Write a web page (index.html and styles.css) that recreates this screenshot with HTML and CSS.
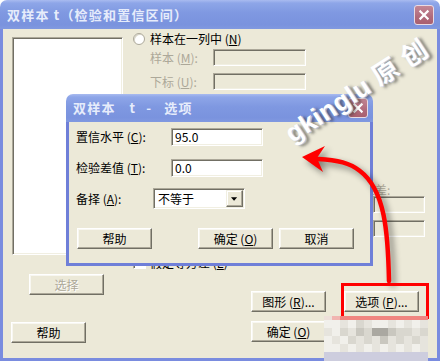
FILE: index.html
```html
<!DOCTYPE html>
<html><head><meta charset="utf-8"><link rel="stylesheet" href="styles.css"></head>
<body>
<div class="win">
  <div class="tbar">
    <span class="ttl">双样本&nbsp;t（检验和置信区间）</span>
    <span class="xbtn"><svg viewBox="0 0 20 20"><path d="M6 6 L14 14 M14 6 L6 14"/></svg></span>
  </div>
  <div class="wbody">
    <div class="lcol">
      <div class="listbox"></div>
      <div class="btn dis b-sel">选择</div>
      <div class="btn b-help">帮助</div>
    </div>
    <div class="rcol">
      <div class="opt"><span class="radio"></span><span>样本在一列中 (<u>N</u>)</span></div>
      <div class="fld"><span class="flab">样本 (<u>M</u>):</span><span class="edit dis"></span></div>
      <div class="fld f2"><span class="flab">下标 (<u>U</u>):</span><span class="edit dis"></span></div>
      <div class="summ">
        <span class="slab">标准差:</span>
        <span class="edit dis se"></span>
        <span class="edit dis se se2"></span>
      </div>
      <div class="opt chkrow"><span class="chk"></span><span>假定等方差 (<u>E</u>)</span></div>
      <div class="brow">
        <div class="btn">图形 (<u>R</u>)...</div>
        <div class="btn">选项 (<u>P</u>)...</div>
      </div>
      <div class="brow b2">
        <div class="btn">确定 (<u>O</u>)</div>
        <div class="btn">取消</div>
      </div>
    </div>
  </div>

  <div class="dlg">
    <div class="dtbar">
      <span class="dttl"><span class="dt1">双样本</span><span class="dt2">t</span><span class="dt3">-</span><span class="dt4">选项</span></span>
      <span class="xbtn"><svg viewBox="0 0 20 20"><path d="M6 6 L14 14 M14 6 L6 14"/></svg></span>
    </div>
    <div class="dbody">
      <div class="drow"><span class="dlab">置信水平 (<u>C</u>):</span><span class="edit val">95.0</span></div>
      <div class="drow r2"><span class="dlab">检验差值 (<u>T</u>):</span><span class="edit val">0.0</span></div>
      <div class="drow r3"><span class="dlab l3">备择 (<u>A</u>):</span>
        <span class="combo"><span class="ctext">不等于</span><span class="cbtn"><svg viewBox="0 0 8 4"><path d="M0 0 H7 L3.5 4 Z"/></svg></span></span>
      </div>
      <div class="dbtns">
        <div class="btn">帮助</div>
        <div class="btn ok">确定 (<u>O</u>)</div>
        <div class="btn cn">取消</div>
      </div>
    </div>
  </div>

  <div class="wmark">gkinglu 原 创</div>

  <svg class="arrow" viewBox="0 0 440 361" width="440" height="361">
    <path d="M389 281 C388 232 385 190 360 171 C350 163 338 160 318 159" stroke="#ff0000" stroke-width="4.5" fill="none" stroke-linecap="round"/>
    <path d="M302 157 L325 146 L317 158 L323 172 Z" fill="#ff0000"/>
  </svg>

  <div class="redbox"></div>

  <div class="mosaic">
    <i class="q"></i><i class="r"></i><i class="p"></i><i class="p"></i><i class="p"></i><i class="p"></i><i class="p"></i><i class="p"></i><i class="p"></i><i class="p"></i><i class="p"></i><i class="p"></i><i class="p"></i>
    <i class="a"></i><i class="a"></i><i class="b"></i><i class="a"></i><i class="c"></i><i class="b"></i><i class="a"></i><i class="a"></i><i class="b"></i><i class="a"></i><i class="b"></i><i class="a"></i><i class="b"></i>
    <i class="b"></i><i class="a"></i><i class="c"></i><i class="b"></i><i class="d"></i><i class="c"></i><i class="e"></i><i class="e"></i><i class="d"></i><i class="c"></i><i class="c"></i><i class="b"></i><i class="c"></i>
    <i class="a"></i><i class="b"></i><i class="a"></i><i class="c"></i><i class="b"></i><i class="c"></i><i class="b"></i><i class="d"></i><i class="b"></i><i class="c"></i><i class="b"></i><i class="c"></i><i class="b"></i>
    <i class="a"></i><i class="a"></i><i class="b"></i><i class="a"></i><i class="b"></i><i class="a"></i><i class="b"></i><i class="a"></i><i class="b"></i><i class="a"></i><i class="b"></i><i class="a"></i><i class="b"></i>
  </div>
  <div class="lav"></div>
</div>
</body></html>
```

FILE: styles.css
```css
* { box-sizing: border-box; margin: 0; padding: 0; }
body {
  width: 440px; height: 361px; overflow: hidden; background: #ffffff;
  font-family: "Noto Sans CJK SC", "Noto Sans", sans-serif; font-size: 12px; color: #000;
}
u { text-decoration: underline; text-underline-offset: 1px; }

.win { position: relative; width: 440px; height: 361px; display: flex; flex-direction: column; }

.tbar {
  height: 29px; flex: none; display: flex; align-items: center; justify-content: space-between;
  padding: 0 6px 0 7px; border-radius: 7px 7px 0 0;
  background: linear-gradient(#a9bbf0 0, #8ea6e8 3px, #7f98e1 45%, #7a93de 85%, #8199e0 100%);
}
.ttl, .dttl { font-weight: bold; font-size: 13px; color: #e6ecfb; line-height: 16px; letter-spacing: 1.2px; }
.dttl { display: flex; }
.dt2 { margin-left: 14px; }
.dt3 { margin-left: 10px; }
.dt4 { margin-left: 12px; }

.xbtn {
  width: 20px; height: 20px; border-radius: 3px; display: block;
  border: 1px solid #e9dbe3; background: linear-gradient(#c48795, #b06a7b 60%, #a9606f);
}
.xbtn svg { display: block; width: 18px; height: 18px; }
.xbtn path { stroke: #ffffff; stroke-width: 2.4; stroke-linecap: square; fill: none; }

.wbody {
  flex: 1; display: flex; background: #ece9d8;
  border: 3px solid #7a8cdf; border-top: 0; padding-left: 9px;
}

.lcol { width: 111px; flex: none; display: flex; flex-direction: column; }
.listbox {
  margin-top: 8px; height: 218px; background: #fff;
  border: 1px solid; border-color: #aca899 #ffffff #ffffff #aca899;
  box-shadow: inset 1px 1px #716f64, inset -1px -1px #f1efe2;
}

.btn {
  width: 75px; height: 21px; flex: none; display: flex; align-items: center; justify-content: center;
  background: #ece9d8; line-height: 14px; white-space: nowrap;
  border: 1px solid; border-color: #ffffff #716f64 #716f64 #ffffff;
  box-shadow: inset -1px -1px #aca899, inset 1px 1px #f8f7f1;
}
.btn.dis { color: #aca899; text-shadow: 1px 1px #ffffff; }
.b-sel { margin-top: 19px; margin-left: 17px; }
.b-help { margin-top: 27px; margin-left: -1px; }

.rcol { margin-left: 10px; width: 304px; display: flex; flex-direction: column; }
.opt { display: flex; align-items: center; height: 13px; margin-top: 3px; line-height: 13px; }
.radio {
  width: 12px; height: 12px; border-radius: 50%; margin-right: 5px; flex: none;
  background: #ffffff; border: 1px solid #aca899; box-shadow: inset 1px 1px #d9d6c8;
}
.chk {
  width: 13px; height: 13px; margin-right: 4px; flex: none; background: #ffffff;
  border: 1px solid; border-color: #aca899 #ffffff #ffffff #aca899;
  box-shadow: inset 1px 1px #716f64;
}
.chkrow { margin-top: 19px; }

.fld { display: flex; align-items: center; margin-top: 4px; margin-left: 17px; height: 17px; color: #aca899; }
.fld.f2 { margin-top: 7px; }
.flab { width: 63px; flex: none; line-height: 14px; }

.edit {
  display: block; width: 93px; height: 17px; background: #ffffff; flex: none;
  border: 1px solid; border-color: #aca899 #ffffff #ffffff #aca899;
  box-shadow: inset 1px 1px #716f64, inset -1px -1px #f1efe2;
}
.edit.dis { background: #ece9d8; }

.summ { display: flex; flex-direction: column; margin-top: 94px; margin-left: 218px; }
.slab { color: #aca899; line-height: 12px; height: 12px; }
.se { width: 52px; margin-left: 22px; }
.se2 { margin-top: 7px; }

.brow { display: flex; justify-content: flex-end; gap: 18px; padding-right: 18px; margin-top: 22px; }
.brow.b2 { margin-top: 9px; }

/* inner dialog */
.dlg {
  position: absolute; left: 66px; top: 94px; width: 307px; height: 172px;
  display: flex; flex-direction: column; border-radius: 7px 7px 0 0;
}
.dtbar {
  height: 28px; flex: none; display: flex; align-items: center; justify-content: space-between;
  padding: 0 5px 0 7px; border-radius: 7px 7px 0 0;
  background: linear-gradient(#a9bbf0 0, #8ea6e8 3px, #7f98e1 45%, #7a93de 85%, #8199e0 100%);
}
.dbody {
  flex: 1; background: #ece9d8; border: 3px solid #6f7fd8; border-top: 0;
  padding: 6px 0 0 7px; display: flex; flex-direction: column;
}
.drow { display: flex; align-items: center; height: 18px; }
.drow.r2 { margin-top: 13px; }
.drow.r3 { margin-top: 11px; height: 21px; }
.dlab { width: 95px; flex: none; line-height: 14px; }
.dlab.l3 { width: 77px; }
.edit.val { width: 92px; height: 18px; padding-left: 3px; line-height: 16px; font-size: 12px; }

.combo {
  width: 92px; height: 21px; display: flex; align-items: center; justify-content: space-between;
  background: #ffffff; padding: 2px 1px 2px 4px;
  border: 1px solid; border-color: #aca899 #ffffff #ffffff #aca899;
  box-shadow: inset 1px 1px #716f64, inset -1px -1px #f1efe2;
}
.ctext { line-height: 14px; }
.cbtn {
  width: 17px; height: 17px; display: flex; align-items: center; justify-content: center;
  background: #ece9d8; border: 1px solid; border-color: #f1efe2 #716f64 #716f64 #f1efe2;
  box-shadow: inset -1px -1px #aca899, inset 1px 1px #ffffff;
}
.cbtn svg { width: 7px; height: 4px; display: block; }
.cbtn path { fill: #000; }

.dbtns { display: flex; margin-top: 19px; margin-left: 1px; }
.dbtns .ok { margin-left: 46px; }
.dbtns .cn { margin-left: 6px; }

/* annotations */
.wmark {
  position: absolute; left: 280px; top: 124px; transform: rotate(-33deg); transform-origin: 0 0;
  font-family: "Liberation Sans", "Noto Sans CJK SC", sans-serif; font-weight: bold; font-size: 26px;
  color: #ffffff; white-space: nowrap; line-height: 28px; letter-spacing: 0.5px;
  text-shadow: 1px 1px 0 #b8c2d8, 3px 3px 3px rgba(40, 40, 40, 0.55);
}
.arrow {
  position: absolute; left: 0; top: 0; pointer-events: none;
  filter: drop-shadow(4px 4px 3px rgba(0, 0, 0, 0.45));
}
.redbox { position: absolute; left: 341px; top: 283px; width: 88px; height: 36px; border: 3px solid #ff0000; }

.mosaic {
  position: absolute; left: 324px; top: 316px; width: 104px;
  display: grid; grid-template-columns: repeat(13, 8px); grid-template-rows: 4px repeat(4, 8px);
}
.mosaic i { display: block; }
.mosaic .a { background: #f1f0eb; }
.mosaic .b { background: #e6e4dd; }
.mosaic .c { background: #d9d7cf; }
.mosaic .d { background: #c9c7bf; }
.mosaic .e { background: #aaa8a1; }
.mosaic .p { background: #f08580; }
.mosaic .q { background: #ede0da; }
.mosaic .r { background: #f1b5b0; }
.lav { position: absolute; left: 324px; top: 352px; width: 104px; height: 9px; background: #cdcdde; }
```
